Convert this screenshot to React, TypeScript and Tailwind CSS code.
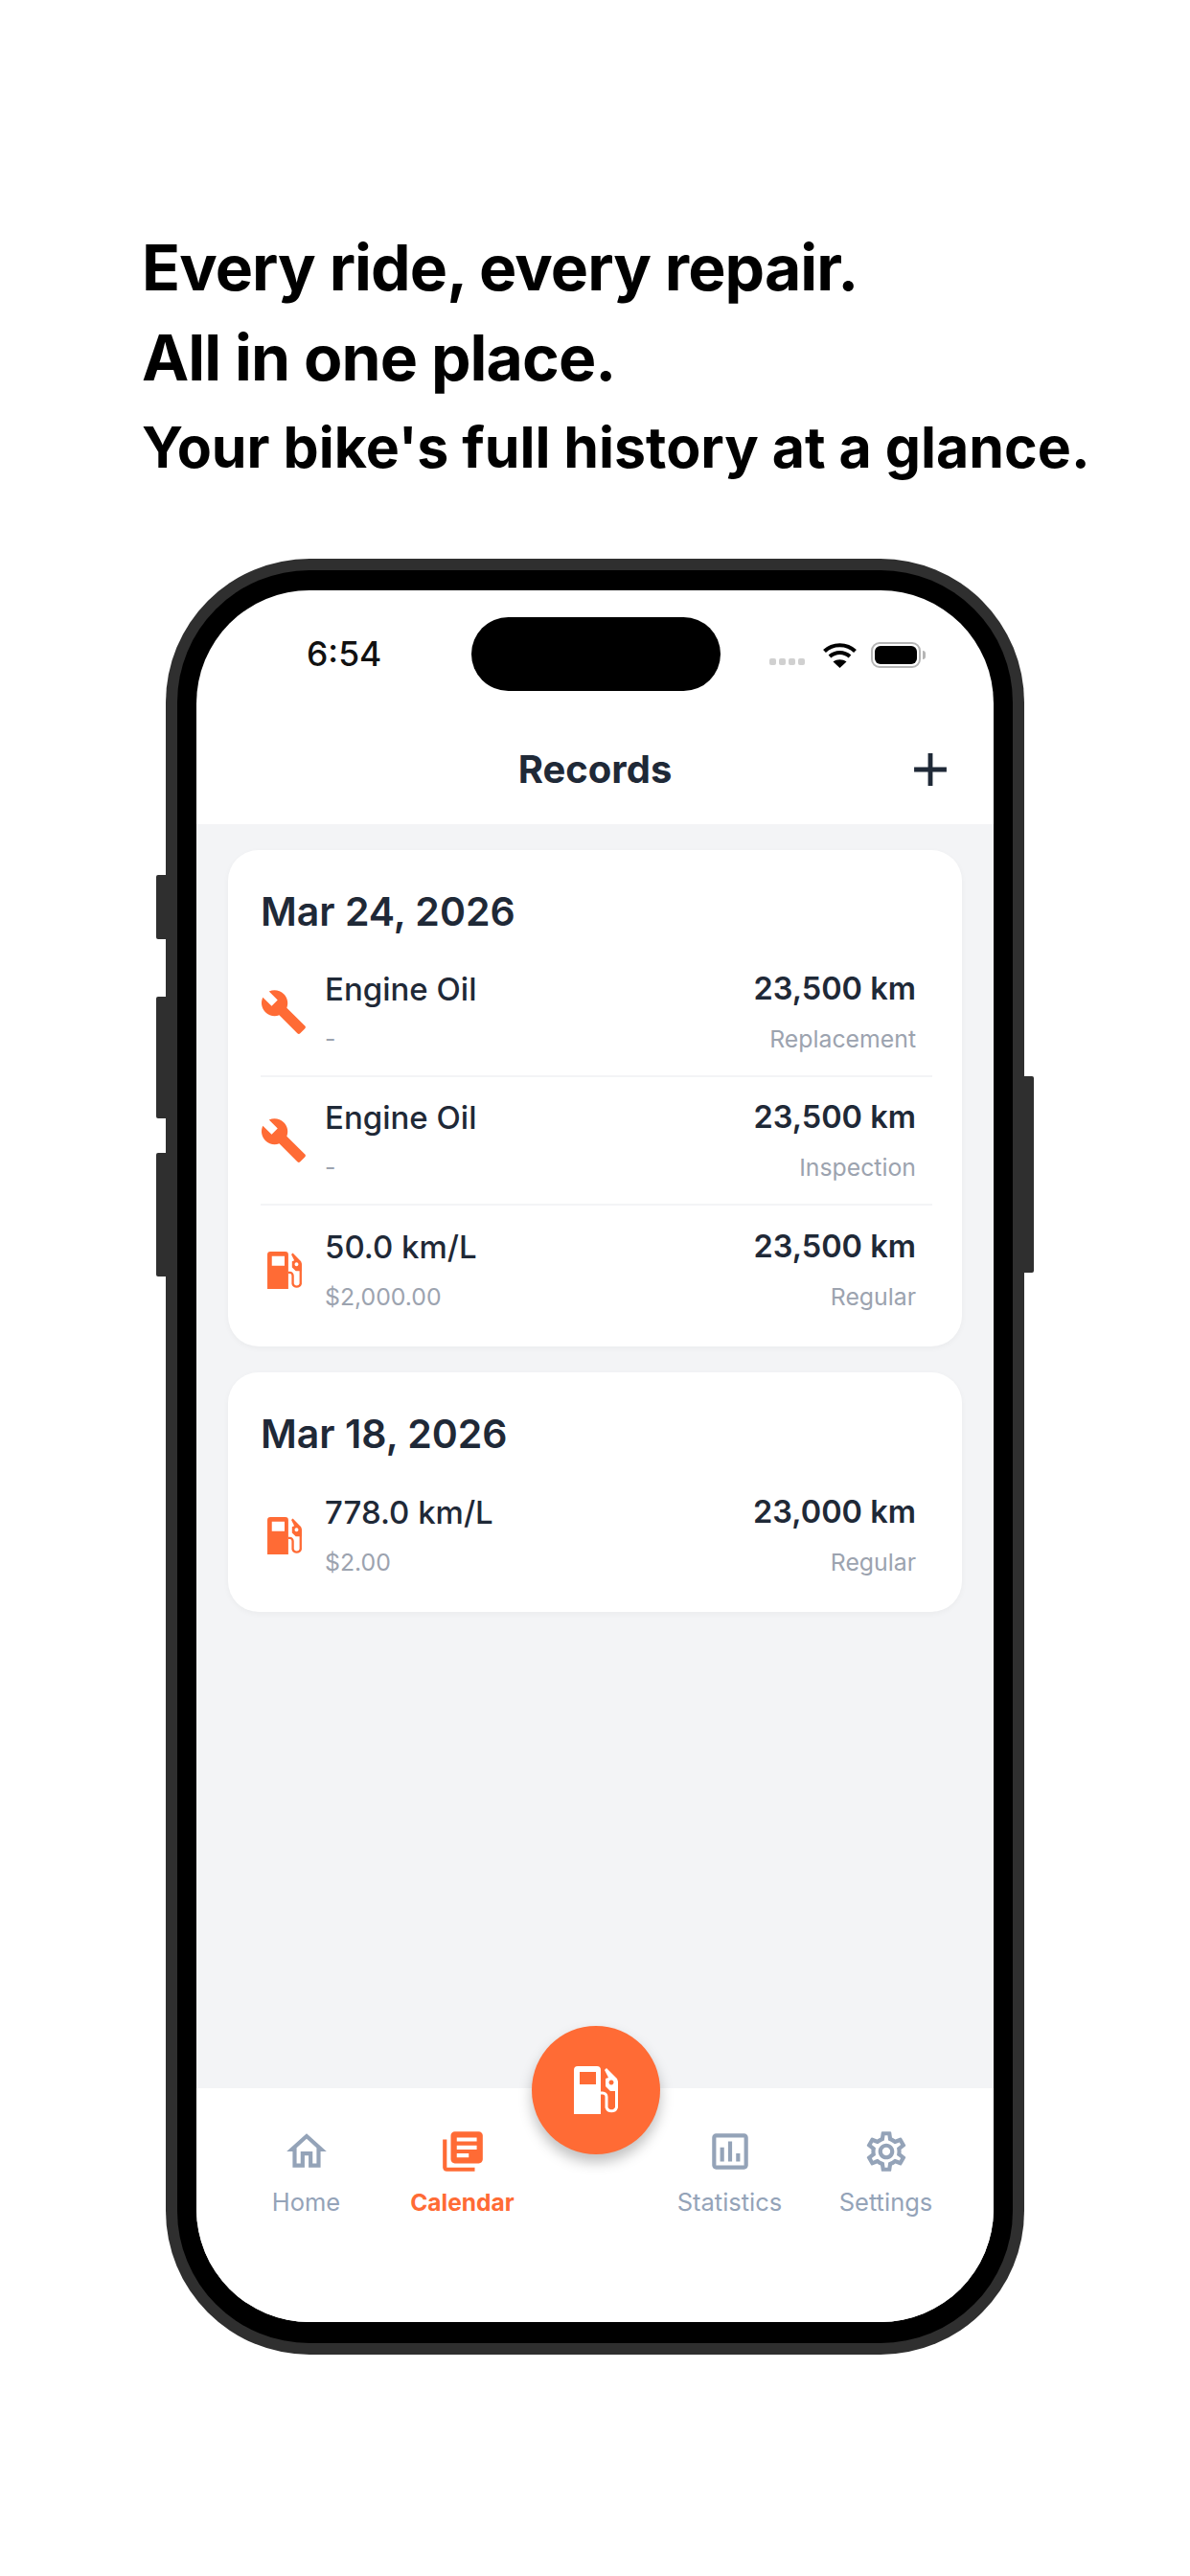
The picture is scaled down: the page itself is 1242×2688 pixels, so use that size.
import { MdAdd, MdBuild, MdLibraryBooks, MdOutlineAssessment, MdOutlineHome, MdOutlineSettings } from "react-icons/md";

function FuelIcon({ className }: { className: string }) {
  return (
    <svg viewBox="0 0 46 50" className={className} fill="none">
      <path
        fillRule="evenodd"
        fill="currentColor"
        d="M4 0H24a4 4 0 0 1 4 4V50H0V4a4 4 0 0 1 4-4ZM6 6V19H23V6Z"
      />
      <path d="M28 28h2a4 4 0 0 1 4 4v11a5.500 5.500 0 0 0 10.500 0V17" stroke="currentColor" strokeWidth="3" />
      <path fillRule="evenodd" fill="currentColor" d="M32 4l2-2 11 11 1 3v10h-8l-5-5V13l3-1ZM39 14.500a2.500 2.500 0 1 0 .01 0Z" />
    </svg>
  );
}

function WifiIcon() {
  return (
    <svg viewBox="0 0 35 27" className="w-[35px] h-[27px]" fill="none" stroke="black" strokeWidth="4">
      <path d="M1.500 9.500C10 1 25 1 33.500 9.500" />
      <path d="M7 15c6-5.500 15-5.500 21 0" />
      <path fill="black" stroke="none" d="M17.500 27l-7-6.500c4-3 10-3 14 0Z" />
    </svg>
  );
}

function BatteryIcon() {
  return (
    <div className="flex items-center gap-[2px]">
      <div className="w-[52px] h-[27px] rounded-[9px] border-2 border-[#b5b5b5] p-[2px]">
        <div className="w-full h-full rounded-[6px] bg-black" />
      </div>
      <div className="w-[3px] h-[9px] rounded-r-full bg-[#b5b5b5]" />
    </div>
  );
}

type Rec = { icon: "wrench" | "fuel"; title: string; sub: string; km: string; kind: string };

const groups: { date: string; rows: Rec[] }[] = [
  {
    date: "Mar 24, 2026",
    rows: [
      { icon: "wrench", title: "Engine Oil", sub: "-", km: "23,500 km", kind: "Replacement" },
      { icon: "wrench", title: "Engine Oil", sub: "-", km: "23,500 km", kind: "Inspection" },
      { icon: "fuel", title: "50.0 km/L", sub: "$2,000.00", km: "23,500 km", kind: "Regular" },
    ],
  },
  {
    date: "Mar 18, 2026",
    rows: [{ icon: "fuel", title: "778.0 km/L", sub: "$2.00", km: "23,000 km", kind: "Regular" }],
  },
];

function Row({ row, last }: { row: Rec; last: boolean }) {
  return (
    <div className={`flex items-center h-[134px] pr-[17px] ${last ? "" : "border-b-2 border-[#f3f4f6]"}`}>
      <div className="w-[67px] shrink-0 flex items-center">
        {row.icon === "wrench" ? (
          <MdBuild className="w-[50px] h-[50px] -ml-[1px] text-[#ff6b35]" />
        ) : (
          <FuelIcon className="w-[36px] h-[39px] ml-[7px] text-[#ff6b35]" />
        )}
      </div>
      <div className="flex-1 flex flex-col">
        <div className="text-[33px] leading-[42px] font-medium text-[#1f2937]">{row.title}</div>
        <div className="text-[24.8px] leading-[34px] mt-[14px] text-[#9ca3af]">{row.sub}</div>
      </div>
      <div className="flex flex-col items-end">
        <div className="text-[32.5px] leading-[42px] font-semibold text-[#1f2937]">{row.km}</div>
        <div className="text-[24.8px] leading-[34px] mt-[14px] text-[#9ca3af]">{row.kind}</div>
      </div>
    </div>
  );
}

function NavItem({ label, active, children }: { label: string; active?: boolean; children: React.ReactNode }) {
  return (
    <div className={`w-[163px] flex flex-col items-center ${active ? "text-[#ff6b35]" : "text-[#94a3b8]"}`}>
      <div className="h-[48px] flex items-center justify-center">{children}</div>
      <div className={`mt-[13px] leading-[32px] ${active ? "text-[24.5px] font-bold" : "text-[25.5px]"}`}>{label}</div>
    </div>
  );
}

export default function App() {
  return (
    <div className="w-[1242px] h-[2688px] bg-white font-['Inter',sans-serif] overflow-hidden">
      <div className="pt-[232px] pl-[148px] text-black font-[750]">
        <div className="text-[66px] leading-[94px] tracking-[-0.9px]">Every ride, every repair.</div>
        <div className="text-[66px] leading-[94px] tracking-[-0.9px]">All in one place.</div>
        <div className="text-[59px] leading-[94px]">Your bike's full history at a glance.</div>
      </div>

      {/* phone */}
      <div className="relative mt-[69px] ml-[173px] w-[896px] h-[1874px] rounded-[150px] bg-[#2f2f2f] p-[12px]">
        <div className="absolute -left-[10px] top-[330px] w-[10px] h-[67px] rounded-l-[2px] bg-[#2f2f2f]" />
        <div className="absolute -left-[10px] top-[457px] w-[10px] h-[127px] rounded-l-[2px] bg-[#2f2f2f]" />
        <div className="absolute -left-[10px] top-[620px] w-[10px] h-[129px] rounded-l-[2px] bg-[#2f2f2f]" />
        <div className="absolute -right-[10px] top-[540px] w-[10px] h-[205px] rounded-r-[2px] bg-[#2f2f2f]" />

        <div className="h-full w-full rounded-[138px] bg-black pt-[21px] pb-[22px] px-[20px]">
          <div className="relative h-full w-full rounded-[118px] bg-white overflow-hidden flex flex-col">
            {/* status bar */}
            <div className="pt-[28px] grid grid-cols-[287px_260px_1fr] items-center">
              <div className="pl-[115px] text-[35.5px] leading-[40px] font-medium text-[#111]">6:54</div>
              <div className="h-[77px] rounded-full bg-black" />
              <div className="pl-[51px] flex items-start mt-[1px]">
                <div className="flex gap-[3px] pt-[17px] mr-[19px]">
                  <div className="w-[7px] h-[7px] rounded-[2px] bg-[#d0d0d0]" />
                  <div className="w-[7px] h-[7px] rounded-[2px] bg-[#d0d0d0]" />
                  <div className="w-[7px] h-[7px] rounded-[2px] bg-[#d0d0d0]" />
                  <div className="w-[7px] h-[7px] rounded-[2px] bg-[#d0d0d0]" />
                </div>
                <WifiIcon />
                <div className="ml-[15px]">
                  <BatteryIcon />
                </div>
              </div>
            </div>

            {/* header */}
            <div className="h-[139px] pt-[24px] grid grid-cols-[1fr_auto_1fr] items-center">
              <div />
              <div className="text-[40px] font-bold text-[#1f2937]">Records</div>
              <div className="flex justify-end pr-[37px]">
                <MdAdd className="w-[58px] h-[58px] text-[#1f2937]" />
              </div>
            </div>

            {/* list */}
            <div className="flex-1 bg-[#f3f4f6] pt-[27px] px-[33px] flex flex-col gap-[27px]">
              {groups.map((g) => (
                <div key={g.date} className="bg-white rounded-[32px] pl-[34px] pr-[31px] pb-[13px] shadow-[0_2px_6px_rgba(0,0,0,0.04)]">
                  <div className="h-[103px] pt-[26px] flex items-center text-[41px] font-semibold text-[#1f2937]">{g.date}</div>
                  {g.rows.map((r, i) => (
                    <Row key={i} row={r} last={i === g.rows.length - 1} />
                  ))}
                </div>
              ))}
            </div>

            {/* tab bar */}
            <div className="h-[244px] bg-white pl-[33px] pt-[42px] flex items-start">
              <NavItem label="Home">
                <MdOutlineHome className="w-[50px] h-[50px]" />
              </NavItem>
              <NavItem label="Calendar" active>
                <MdLibraryBooks className="w-[50px] h-[50px]" />
              </NavItem>
              <div className="w-[116px]" />
              <NavItem label="Statistics">
                <MdOutlineAssessment className="w-[50px] h-[50px]" />
              </NavItem>
              <NavItem label="Settings">
                <MdOutlineSettings className="w-[50px] h-[50px]" />
              </NavItem>
            </div>

            {/* fab */}
            <div className="absolute left-[350px] bottom-[175px] w-[134px] h-[134px] rounded-full bg-[#ff6b35] flex items-center justify-center shadow-[0_8px_14px_rgba(0,0,0,0.25)]">
              <FuelIcon className="w-[46px] h-[50px] text-white" />
            </div>
          </div>
        </div>
      </div>
    </div>
  );
}
